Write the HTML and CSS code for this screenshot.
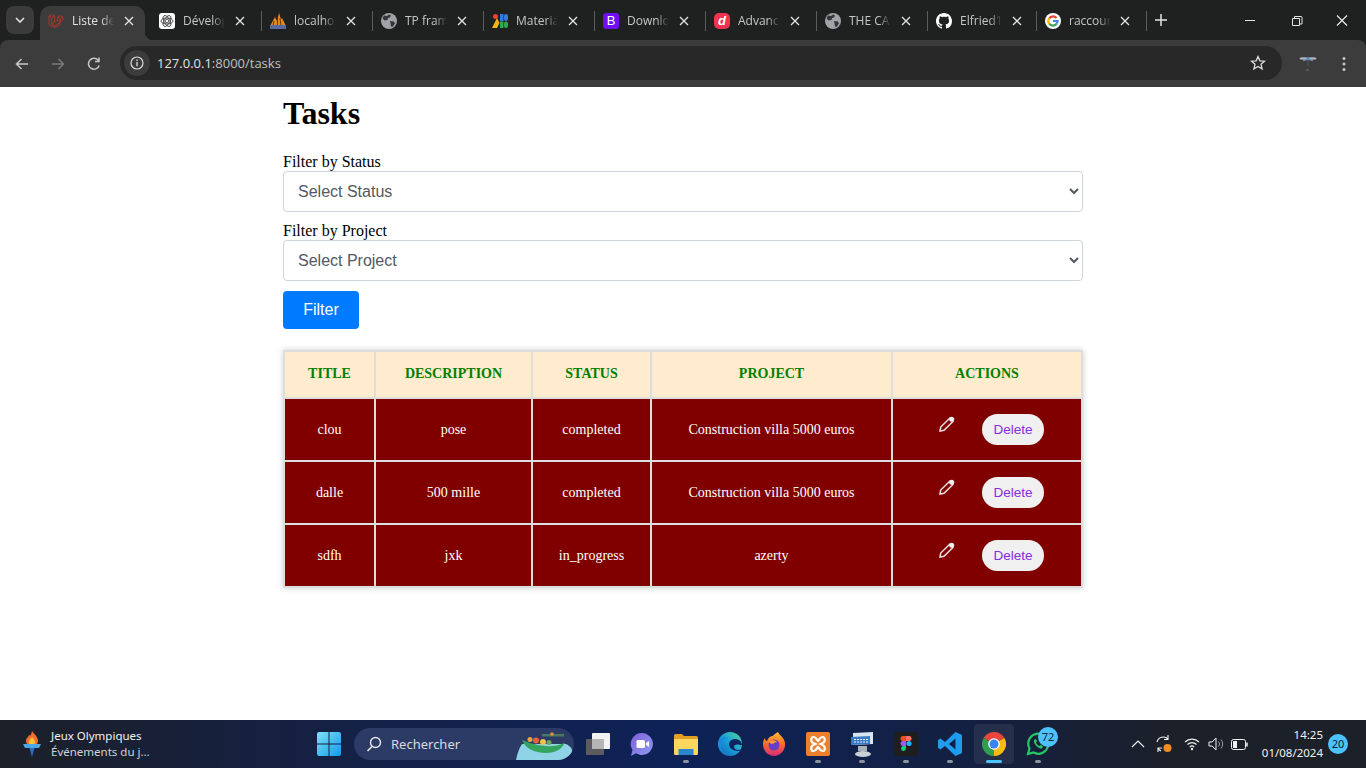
FILE: index.html
```html
<!DOCTYPE html>
<html>
<head>
    <title>Liste des tasks</title>
    <meta charset="utf-8">
    <link rel="stylesheet" href="styles.css">
</head>
<body>
<div class="screen">

    <div class="tabstrip">
        <div class="tab-menu"><svg width="10" height="6" viewBox="0 0 10 6"><path d="M1 1l4 4 4-4" fill="none" stroke="#e3e3e3" stroke-width="1.6"/></svg></div>
        <div class="tab active">
            <svg class="fav" viewBox="0 0 16 16"><path d="M1 3v8.600l5.500 3.100 5.500-3.100V8.900l3-1.800V4.200l-2.700-1.500-2.700 1.500v3L6.500 9V3L3.700 1.400zM1 3l2.700 1.600L6.500 3M3.700 4.600v6.600l2.800 1.600 5.500-3.200M6.500 12.800v1.900M9.600 4.200l2.700 1.500L15 4.200M12.300 5.700v3L9.600 7.200M6.500 9l-2.800 2.200" fill="none" stroke="#b9342b" stroke-width=".9"/></svg>
            <span class="tab-title">Liste des tasks</span>
            <svg class="tab-x" viewBox="0 0 10 10"><path d="M1 1l8 8M9 1l-8 8"/></svg>
        </div>
        <div class="tab">
            <svg class="fav" viewBox="0 0 16 16"><rect width="16" height="16" rx="3" fill="#fff"/><g fill="none" stroke="#333" stroke-width=".8"><circle cx="8" cy="8" r="1.800"/><ellipse cx="8" cy="8" rx="6" ry="3"/><ellipse cx="8" cy="8" rx="6" ry="3" transform="rotate(60 8 8)"/><ellipse cx="8" cy="8" rx="6" ry="3" transform="rotate(120 8 8)"/></g></svg>
            <span class="tab-title">Développement</span>
            <svg class="tab-x" viewBox="0 0 10 10"><path d="M1 1l8 8M9 1l-8 8"/></svg>
        </div>
        <div class="tab sep">
            <svg class="fav" viewBox="0 0 16 16"><path d="M0 13L5 4l2 4 2-8 2 6 1-1 4 8z" fill="#e08a1e"/><path d="M7.500 3v10M10 5l1 8M4 8l-1 5" stroke="#3c2a10" stroke-width=".8"/><rect y="12" width="16" height="4" fill="#5a6aa0"/></svg>
            <span class="tab-title">localhost</span>
            <svg class="tab-x" viewBox="0 0 10 10"><path d="M1 1l8 8M9 1l-8 8"/></svg>
        </div>
        <div class="tab sep">
            <svg class="fav" viewBox="0 0 16 16"><use href="#globe"/></svg>
            <span class="tab-title">TP framework</span>
            <svg class="tab-x" viewBox="0 0 10 10"><path d="M1 1l8 8M9 1l-8 8"/></svg>
        </div>
        <div class="tab sep">
            <svg class="fav" viewBox="0 0 16 16"><path d="M0 15L5 5l2.500 5L5 15z" fill="#f5b31a"/><circle cx="3.500" cy="3.500" r="2.500" fill="#e8452c"/><rect x="8" y="1" width="3.500" height="7" fill="#2f7de1"/><rect x="12" y="1" width="4" height="7" rx="2" fill="#2f7de1"/><rect x="8" y="8.500" width="3.500" height="6.500" fill="#2ea84a"/><rect x="12" y="8.500" width="4" height="6.500" rx="2" fill="#2ea84a"/></svg>
            <span class="tab-title">Material</span>
            <svg class="tab-x" viewBox="0 0 10 10"><path d="M1 1l8 8M9 1l-8 8"/></svg>
        </div>
        <div class="tab sep">
            <span class="fav letter boot">B</span>
            <span class="tab-title">Download</span>
            <svg class="tab-x" viewBox="0 0 10 10"><path d="M1 1l8 8M9 1l-8 8"/></svg>
        </div>
        <div class="tab sep">
            <span class="fav letter devd">d</span>
            <span class="tab-title">Advanced</span>
            <svg class="tab-x" viewBox="0 0 10 10"><path d="M1 1l8 8M9 1l-8 8"/></svg>
        </div>
        <div class="tab sep">
            <svg class="fav" viewBox="0 0 16 16"><use href="#globe"/></svg>
            <span class="tab-title">THE CAMP</span>
            <svg class="tab-x" viewBox="0 0 10 10"><path d="M1 1l8 8M9 1l-8 8"/></svg>
        </div>
        <div class="tab sep narrow">
            <svg class="fav" viewBox="0 0 16 16"><path fill="#fff" d="M8 0C3.58 0 0 3.58 0 8c0 3.54 2.29 6.53 5.47 7.59.4.07.55-.17.55-.38 0-.19-.01-.82-.01-1.49-2.01.37-2.53-.49-2.69-.94-.09-.23-.48-.94-.82-1.13-.28-.15-.68-.52-.01-.53.63-.01 1.08.58 1.23.82.72 1.21 1.87.87 2.33.66.07-.52.28-.87.51-1.07-1.78-.2-3.64-.89-3.64-3.95 0-.87.31-1.59.82-2.15-.08-.2-.36-1.02.08-2.12 0 0 .67-.21 2.2.82.64-.18 1.32-.27 2-.27.68 0 1.36.09 2 .27 1.53-1.04 2.2-.82 2.2-.82.44 1.1.16 1.92.08 2.12.51.56.82 1.27.82 2.15 0 3.07-1.87 3.75-3.65 3.95.29.25.54.73.54 1.48 0 1.07-.01 1.93-.01 2.2 0 .21.15.46.55.38A8.013 8.013 0 0016 8c0-4.42-3.58-8-8-8z"/></svg>
            <span class="tab-title">Elfried1</span>
            <svg class="tab-x" viewBox="0 0 10 10"><path d="M1 1l8 8M9 1l-8 8"/></svg>
        </div>
        <div class="tab sep last">
            <svg class="fav" viewBox="0 0 16 16"><circle cx="8" cy="8" r="8" fill="#fff"/><g fill="none" stroke-width="2.200"><path d="M11.500 5A4.600 4.600 0 0 0 4.200 5.300" stroke="#ea4335"/><path d="M4.200 5.300a4.600 4.600 0 0 0 0 5.400" stroke="#fbbc05"/><path d="M4.200 10.700a4.600 4.600 0 0 0 7.600-.3" stroke="#34a853"/><path d="M11.800 10.400A4.600 4.600 0 0 0 12.600 8H8" stroke="#4285f4"/></g></svg>
            <span class="tab-title">raccourci</span>
            <svg class="tab-x" viewBox="0 0 10 10"><path d="M1 1l8 8M9 1l-8 8"/></svg>
        </div>
        <svg class="tab-plus" width="12" height="12" viewBox="0 0 12 12"><path d="M6 0v12M0 6h12" stroke="#e3e3e3" stroke-width="1.500"/></svg>
        <div class="win-btns">
            <svg width="46" height="40" viewBox="0 0 46 40"><path d="M18 20.500h10" stroke="#e3e3e3"/></svg>
            <svg width="46" height="40" viewBox="0 0 46 40"><path d="M19.500 18.500h7v7h-7zM21.500 18.500v-2h6.500a1 1 0 0 1 1 1v6.500h-2.500" fill="none" stroke="#e3e3e3"/></svg>
            <svg width="46" height="40" viewBox="0 0 46 40"><path d="M18 15.500l10 10M28 15.500l-10 10" stroke="#f0f0f0" stroke-width="1.100"/></svg>
        </div>
    </div>

    <div class="toolbar">
        <svg class="nav-ic" viewBox="0 0 16 16"><path d="M14 8H2.500M7.500 3l-5 5 5 5" fill="none" stroke="#c7c7c7" stroke-width="1.500"/></svg>
        <svg class="nav-ic" viewBox="0 0 16 16"><path d="M2 8h11.500M8.500 3l5 5-5 5" fill="none" stroke="#7b7b7b" stroke-width="1.500"/></svg>
        <svg class="nav-ic" viewBox="0 0 16 16"><path d="M13.200 9.500A5.500 5.500 0 1 1 12.500 4.600M13 1.500v4H9" fill="none" stroke="#c7c7c7" stroke-width="1.500"/></svg>
        <div class="omnibox">
            <span class="site-info"><svg width="14" height="14" viewBox="0 0 14 14"><circle cx="7" cy="7" r="6" fill="none" stroke="#dcdcdc" stroke-width="1.200"/><path d="M7 6v4.200M7 3.600v1.300" stroke="#dcdcdc" stroke-width="1.300"/></svg></span>
            <span class="url">127.0.0.1<span class="url-dim">:8000/tasks</span></span>
            <svg class="star" width="16" height="16" viewBox="0 0 16 16"><path d="M8 1.500l1.900 4.300 4.600.4-3.500 3.100 1.100 4.600L8 11.500l-4.100 2.400L5 9.300 1.500 6.200l4.600-.4z" fill="none" stroke="#dcdcdc" stroke-width="1.300"/></svg>
        </div>
        <svg class="ext" width="18" height="20" viewBox="0 0 18 20"><ellipse cx="5" cy="4.500" rx="4.500" ry="1.200" fill="#aeb8c8"/><ellipse cx="13" cy="4.500" rx="4.500" ry="1.200" fill="#aeb8c8"/><path d="M4 7l4-1.500M14 7l-4-1.500" stroke="#7f8ba0"/><circle cx="9" cy="5" r="1.600" fill="#4a90d8"/><path d="M9 6v6" stroke="#4c586c"/><circle cx="8.500" cy="16" r="1.300" fill="#5a5f66"/></svg>
        <svg class="dots" width="4" height="16" viewBox="0 0 4 16"><circle cx="2" cy="2.500" r="1.500" fill="#c7c7c7"/><circle cx="2" cy="8" r="1.500" fill="#c7c7c7"/><circle cx="2" cy="13.500" r="1.500" fill="#c7c7c7"/></svg>
    </div>

    <div class="page">
        <div class="container">
            <h1>Tasks</h1>
            <form class="filters">
                <label for="status">Filter by Status</label>
                <select id="status" class="field"><option>Select Status</option></select>
                <label for="project">Filter by Project</label>
                <select id="project" class="field"><option>Select Project</option></select>
                <button type="button" class="btn-filter">Filter</button>
            </form>
            <table class="tasks">
                <tr>
                    <th class="c1">Title</th>
                    <th class="c2">Description</th>
                    <th class="c3">Status</th>
                    <th class="c4">Project</th>
                    <th>Actions</th>
                </tr>
                <tr>
                    <td>clou</td>
                    <td>pose</td>
                    <td>completed</td>
                    <td>Construction villa 5000 euros</td>
                    <td><div class="actions"><svg class="edit" viewBox="0 0 16 16"><path d="M1 15l.7-4 9-8.700 3.200 3.200L5 14.300z" fill="none" stroke="#e8e0e0" stroke-width="1.500"/><circle cx="12.700" cy="3.300" r="2.500" fill="#f4f0f0"/></svg><button type="button" class="btn-del">Delete</button></div></td>
                </tr>
                <tr>
                    <td>dalle</td>
                    <td>500 mille</td>
                    <td>completed</td>
                    <td>Construction villa 5000 euros</td>
                    <td><div class="actions"><svg class="edit" viewBox="0 0 16 16"><path d="M1 15l.7-4 9-8.700 3.200 3.200L5 14.300z" fill="none" stroke="#e8e0e0" stroke-width="1.500"/><circle cx="12.700" cy="3.300" r="2.500" fill="#f4f0f0"/></svg><button type="button" class="btn-del">Delete</button></div></td>
                </tr>
                <tr>
                    <td>sdfh</td>
                    <td>jxk</td>
                    <td>in_progress</td>
                    <td>azerty</td>
                    <td><div class="actions"><svg class="edit" viewBox="0 0 16 16"><path d="M1 15l.7-4 9-8.700 3.200 3.200L5 14.300z" fill="none" stroke="#e8e0e0" stroke-width="1.500"/><circle cx="12.700" cy="3.300" r="2.500" fill="#f4f0f0"/></svg><button type="button" class="btn-del">Delete</button></div></td>
                </tr>
            </table>
        </div>
    </div>

    <div class="taskbar">
        <div class="widget">
            <svg width="20" height="28" viewBox="0 0 20 28"><path d="M10 1c3 4 6 6 6 10 0 1-.3 2-1 3H5c-.8-1-1-2-1-3 0-3 2-3 3-6 1 1 2 1 3-4z" fill="#f0702c"/><path d="M10 7c1.500 2 3 3 3 5 0 1-.3 1.500-.6 2H7.600c-.4-.5-.6-1-.6-2 0-2 2-3 3-5z" fill="#f8c040"/><path d="M1 14h18l-2 4H3z" fill="#4aa8e8"/><path d="M7.500 18h5L10 27z" fill="#2a70c8"/></svg>
            <div class="widget-text">
                <div class="widget-title">Jeux Olympiques</div>
                <div class="widget-sub">Événements du j...</div>
            </div>
        </div>
        <div class="tb-icon">
            <svg width="24" height="24" viewBox="0 0 24 24"><defs><linearGradient id="winb" x1="0" y1="0" x2="1" y2="1"><stop offset="0" stop-color="#7fe0f8"/><stop offset="1" stop-color="#0f9be8"/></linearGradient></defs><path d="M0 2a2 2 0 0 1 2-2h9.500v11.500H0zM12.500 0H22a2 2 0 0 1 2 2v9.500H12.500zM0 12.500h11.500V24H2a2 2 0 0 1-2-2zM12.500 12.500H24V22a2 2 0 0 1-2 2h-9.500z" fill="url(#winb)"/></svg>
        </div>
        <div class="search">
            <svg width="16" height="16" viewBox="0 0 16 16"><circle cx="9.500" cy="6.500" r="5" fill="none" stroke="#e8e8e8" stroke-width="1.400"/><path d="M6 10.500L1.500 15" stroke="#e8e8e8" stroke-width="1.600"/></svg>
            <span>Rechercher</span>
            <svg class="search-art" width="58" height="32" viewBox="0 0 58 32"><path d="M0 32c1-5 3-12 6-16h44c4 2 7 5 6 8-1 4-5 8-8 8z" fill="#8ed4e6"/><path d="M6 12c10 4 28 10 42 3 1 0 1 1 0 1-3 6-10 9-18 9C18 25 9 20 6 12z" fill="#35a45e"/><circle cx="14" cy="11.500" r="2.500" fill="#f0a040"/><circle cx="20" cy="12.500" r="3" fill="#e8603c"/><circle cx="27" cy="14" r="3" fill="#f0c050"/><circle cx="33" cy="14.500" r="2.500" fill="#6aa868"/><path d="M26 6h22v2.500H26z" fill="#4c7a60"/><circle cx="36" cy="6" r="1.800" fill="#e8903c"/></svg>
        </div>
        <div class="tb-icon">
            <svg width="24" height="22" viewBox="0 0 24 22"><rect x="0" y="6" width="18" height="16" rx="1" fill="#5c5c5c"/><rect x="6" y="0" width="18" height="16" rx="1" fill="#f2f2f2"/><rect x="6" y="6" width="12" height="10" fill="#b5b5b5"/></svg>
        </div>
        <div class="tb-icon">
            <svg width="24" height="24" viewBox="0 0 24 24"><defs><linearGradient id="meet" x1="0" y1="0" x2="1" y2="1"><stop offset="0" stop-color="#7f5fd8"/><stop offset="1" stop-color="#8f9cf0"/></linearGradient></defs><path d="M12 1a11 11 0 1 1-6 20.300L1 24l1.500-6A11 11 0 0 1 12 1z" fill="url(#meet)"/><rect x="6.500" y="8" width="8.500" height="8" rx="1.500" fill="#fff"/><path d="M16 11l3-2v6l-3-2z" fill="#fff"/></svg>
        </div>
        <div class="tb-icon dot">
            <svg width="24" height="21" viewBox="0 0 24 21"><path d="M0 1.500A1.500 1.500 0 0 1 1.500 0H8l2 2h12.500A1.500 1.500 0 0 1 24 3.500V8H0z" fill="#e0a020"/><path d="M0 5h24v14.500a1.500 1.500 0 0 1-1.500 1.500h-21A1.500 1.500 0 0 1 0 19.500z" fill="#ffd75e"/><rect x="4.500" y="15" width="15" height="6" fill="#2a86d0"/></svg>
        </div>
        <div class="tb-icon">
            <svg width="24" height="24" viewBox="0 0 24 24"><defs><linearGradient id="edg" x1="1" y1="0" x2="0" y2="1"><stop offset="0" stop-color="#4fd89a"/><stop offset=".5" stop-color="#1aa0d8"/><stop offset="1" stop-color="#0f62b8"/></linearGradient></defs><circle cx="12" cy="12" r="12" fill="url(#edg)"/><path d="M24 13c0-4-4-6-7-6-4 0-6 3-6 5 0 4 4 7 9 7 1 0 2-.5 3-1.500-3 1-7 .5-7-3 0-1 1-2 3-2 2 0 3 1 5 .5z" fill="#0c2560"/><path d="M0 12c0-5 5-8 10-6-4 1-7 4-7 9 0 3 2 6 5 8-4-2-8-6-8-11z" fill="#1b8adc"/></svg>
        </div>
        <div class="tb-icon">
            <svg width="24" height="24" viewBox="0 0 24 24"><defs><linearGradient id="ff" x1="0" y1="0" x2="0" y2="1"><stop offset="0" stop-color="#ffc02e"/><stop offset=".5" stop-color="#ff6a2a"/><stop offset="1" stop-color="#d62a7a"/></linearGradient></defs><path d="M16 0c1 3 6 5 7 11 1 7-5 13-11 13S1 19 1 12c0-3 1-5 2-6 0 2 1 3 2 3 1-3 3-5 6-5 0-1 2-2 5-4z" fill="url(#ff)"/><circle cx="12" cy="13" r="5.500" fill="#6a3bc8"/><path d="M7 9c2-1 7-1 8 1-2 0-3 1-4 2-2 0-4-1-4-3z" fill="#ff9a2a"/></svg>
        </div>
        <div class="tb-icon dot">
            <svg width="24" height="24" viewBox="0 0 24 24"><rect width="24" height="24" rx="2" fill="#ee7f2d"/><path d="M7.500 5c-3 0-3 5 0 6l2 1-2 1c-3 1-3 6 0 6s3-3 4.500-4c1.500 1 1.500 4 4.500 4s3-5 0-6l-2-1 2-1c3-1 3-6 0-6s-3 3-4.500 4C10.500 8 10.500 5 7.500 5z" fill="none" stroke="#fff" stroke-width="2.200"/></svg>
        </div>
        <div class="tb-icon dot">
            <svg width="24" height="25" viewBox="0 0 24 25"><path d="M3 1l20-1v12L3 13z" fill="#d8e4f0"/><path d="M1 5l19-1v8L1 13z" fill="#3c78c8"/><path d="M4 7.500h14M4 10h14" stroke="#e8f0f8" stroke-dasharray="2 1"/><path d="M8 14h9v5H8z" fill="#a8b0b8"/><ellipse cx="13" cy="22" rx="8" ry="3" fill="#c8d0d8"/></svg>
        </div>
        <div class="tb-icon dot">
            <svg width="24" height="24" viewBox="0 0 24 24"><rect width="24" height="24" rx="1" fill="#1e1e1e"/><path d="M9 4h3v5H9a2.500 2.500 0 0 1 0-5z" fill="#f24e1e"/><path d="M12 4h3a2.500 2.500 0 0 1 0 5h-3z" fill="#ff7262"/><path d="M9 9h3v5H9a2.500 2.500 0 0 1 0-5z" fill="#a259ff"/><circle cx="15" cy="11.500" r="2.500" fill="#1abcfe"/><path d="M9 14h3v2.500A2.500 2.500 0 1 1 9 14z" fill="#0acf83"/></svg>
        </div>
        <div class="tb-icon dot">
            <svg width="24" height="24" viewBox="0 0 24 24"><path d="M17.500 0L24 3v18l-6.500 3L7 14l-4.500 3.500L0 16V8l2.500-1.500L7 10zM17.500 6.500L11 12l6.500 5.500z" fill="#1f9cf0" fill-rule="evenodd"/></svg>
        </div>
        <div class="tb-icon active">
            <svg width="24" height="24" viewBox="0 0 24 24"><path d="M12 12L1.600 6A12 12 0 0 1 22.400 6z" fill="#e8453c"/><path d="M12 12L1.600 6A12 12 0 0 0 12 24z" fill="#2f9e50"/><path d="M12 12L22.400 6A12 12 0 0 1 12 24z" fill="#f9bc15"/><circle cx="12" cy="12" r="5.800" fill="#fff"/><circle cx="12" cy="12" r="4.500" fill="#3a83f0"/></svg>
        </div>
        <div class="tb-icon dot">
            <svg width="24" height="24" viewBox="0 0 24 24"><path d="M2 22l1.500-5.500A10 10 0 1 1 7.500 20.500z" fill="none" stroke="#25c866" stroke-width="2.200"/><path d="M8.500 7.500c-1 1-1 3 1 5.500s4.500 4 6 3.500 1.500-2 1-2.500l-2-1-1 1c-1 0-3-2-3.500-3.500l1-1-1-2.500z" fill="#25c866"/></svg>
            <span class="count">72</span>
        </div>
        <div class="tray">
            <svg width="14" height="8" viewBox="0 0 14 8"><path d="M1 7l6-6 6 6" fill="none" stroke="#f0f0f0" stroke-width="1.200"/></svg>
            <svg class="tray-sync" width="18" height="20" viewBox="0 0 18 20"><path d="M2 8a6.500 6.500 0 0 1 11-3M13 1v4.500H9M3 18v-4h4M3 14a6 6 0 0 0 3 3" fill="none" stroke="#f0f0f0" stroke-width="1.100"/><circle cx="12.500" cy="14" r="4" fill="#f28a1c"/></svg>
            <svg class="tray-wifi" width="16" height="14" viewBox="0 0 16 14"><path d="M1 5a10 10 0 0 1 14 0M3.500 7.500a6.500 6.500 0 0 1 9 0M5.800 10a3.200 3.200 0 0 1 4.400 0" fill="none" stroke="#f0f0f0" stroke-width="1.200"/><circle cx="8" cy="12" r="1.200" fill="#f0f0f0"/></svg>
            <svg class="tray-vol" width="18" height="14" viewBox="0 0 18 14"><path d="M1 5h3l4-4v12l-4-4H1z" fill="none" stroke="#f0f0f0"/><path d="M10.500 4.500a3.500 3.500 0 0 1 0 5M13 2.500a7 7 0 0 1 0 9" fill="none" stroke="#a0a0a0"/></svg>
            <svg class="tray-bat" width="18" height="11" viewBox="0 0 18 11"><rect x=".5" y=".5" width="14" height="10" rx="2" fill="none" stroke="#f0f0f0"/><rect x="2" y="2" width="4" height="7" fill="#f0f0f0"/><path d="M16 3.500v4" stroke="#f0f0f0" stroke-width="1.500"/></svg>
            <div class="clock"><div>14:25</div><div>01/08/2024</div></div>
            <span class="notif">20</span>
        </div>
    </div>

</div>

<svg class="defs" width="0" height="0"><defs><g id="globe"><circle cx="8" cy="8" r="8" fill="#a0a4a8"/><path d="M3 2.500l3 .5 2-1.500 2 1-1 2-2 .5-.5 2-3 .5-2-2zM9 8l4 .5 1 2-2.500 3.500-1.500-.5-.5-3z" fill="#35363a"/></g></defs></svg>
</body>
</html>
```

FILE: styles.css
```css
* {
    box-sizing: border-box;
}

body {
    margin: 0;
    font-family: "Liberation Serif", serif;
    background: #fff;
}

.screen {
    width: 1366px;
    height: 768px;
    display: flex;
    flex-direction: column;
    overflow: hidden;
    background: #1f2020;
}

.defs {
    position: absolute;
}

/* browser tabs */
.tabstrip {
    height: 40px;
    flex: none;
    display: flex;
    align-items: flex-start;
    padding: 6px 0 0 6px;
    font-family: "Open Sans", sans-serif;
    font-size: 12px;
    color: #c4c7c5;
}

.tab-menu {
    width: 28px;
    height: 28px;
    margin-right: 6px;
    background: #3b3b3b;
    border-radius: 8px;
    display: flex;
    align-items: center;
    justify-content: center;
}

.tab {
    width: 111px;
    height: 34px;
    padding: 0 10px 5px 8px;
    display: flex;
    align-items: center;
    position: relative;
    flex: none;
}

.tab.active {
    width: 105px;
    margin-right: 6px;
    background: #3c3c3c;
    border-radius: 10px 10px 0 0;
    color: #e3e3e3;
}

.tab.active::after {
    content: "";
    position: absolute;
    right: -8px;
    bottom: 0;
    width: 8px;
    height: 8px;
    background: radial-gradient(circle at 100% 0, transparent 8px, #3c3c3c 8.5px);
}

.tab.sep::before {
    content: "";
    position: absolute;
    left: -1px;
    top: 5px;
    height: 20px;
    border-left: 1px solid #5a5b5c;
}

.tab.narrow {
    width: 110px;
}

.tab.last {
    width: 110px;
    margin-left: -1px;
}

.tab.last .tab-x {
    margin-left: 9px;
}

.tab.last::after {
    content: "";
    position: absolute;
    right: 0;
    top: 5px;
    height: 20px;
    border-left: 1px solid #5a5b5c;
}

.fav {
    width: 16px;
    height: 16px;
    flex: none;
}

.letter {
    border-radius: 3px;
    color: #fff;
    text-align: center;
    font-family: "Liberation Sans", sans-serif;
    font-size: 13px;
    line-height: 16px;
}

.boot {
    background: #7010f0;
}

.devd {
    background: #f0334f;
    border-radius: 5px;
    font-style: italic;
    font-weight: bold;
}

.tab-title {
    width: 42px;
    margin-left: 8px;
    white-space: nowrap;
    overflow: hidden;
    -webkit-mask-image: linear-gradient(to right, #000 70%, transparent);
    mask-image: linear-gradient(to right, #000 70%, transparent);
}

.tab-x {
    width: 10px;
    height: 10px;
    margin-left: 10px;
    flex: none;
    fill: none;
    stroke: #e3e3e3;
    stroke-width: 1.3;
}

.tab-plus {
    margin: 8px 0 0 8px;
}

.win-btns {
    margin: -6px 0 0 auto;
    display: flex;
    padding-right: 1px;
}

/* address bar */
.toolbar {
    height: 47px;
    flex: none;
    background: #3c3c3c;
    border-radius: 8px 8px 0 0;
    display: flex;
    align-items: center;
    padding-left: 14px;
    font-family: "Open Sans", sans-serif;
}

.nav-ic {
    width: 16px;
    height: 16px;
    margin-right: 20px;
    flex: none;
}

.nav-ic:nth-child(3) {
    margin-right: 18px;
}

.omnibox {
    width: 1162px;
    height: 34px;
    margin-top: -1px;
    background: #282828;
    border-radius: 17px;
    display: flex;
    align-items: center;
    padding-left: 4px;
    flex: none;
}

.site-info {
    width: 26px;
    height: 26px;
    border-radius: 50%;
    background: #3c3c3c;
    display: flex;
    align-items: center;
    justify-content: center;
}

.url {
    margin-left: 7px;
    font-size: 13px;
    color: #e3e3e3;
}

.url-dim {
    color: #c0c0c0;
}

.star {
    margin-left: auto;
    margin-right: 16px;
}

.ext {
    margin-left: 17px;
}

.dots {
    margin-left: 25px;
}

/* the page itself */
.page {
    flex: 1;
    background: #fff;
    min-height: 0;
}

.container {
    width: 800px;
    margin-left: 283px;
}

h1 {
    margin: 0;
    padding-top: 8px;
    height: 65px;
    font-size: 32px;
    line-height: 37px;
}

.filters {
    display: flex;
    flex-direction: column;
    align-items: flex-start;
    font-size: 16px;
}

.filters label {
    line-height: 19px;
}

.field {
    width: 100%;
    height: 41px;
    margin-bottom: 9px;
    padding: 0 10px;
    font-family: "Liberation Sans", sans-serif;
    font-size: 16px;
    color: #52595f;
    background: #fff;
    border: 1px solid #ced4da;
    border-radius: 4px;
}

.btn-filter {
    width: 76px;
    height: 38px;
    margin-top: 1px;
    font-family: "Liberation Sans", sans-serif;
    font-size: 16px;
    color: #fff;
    background: #007bff;
    border: none;
    border-radius: 4px;
}

.tasks {
    width: 800px;
    margin: 21px 0 0 0;
    border-collapse: collapse;
    box-shadow: 0 0 6px rgba(0, 0, 0, 0.2);
    font-size: 14px;
    text-align: center;
}

.tasks th,
.tasks td {
    border: 2px solid #ddd;
    padding: 0;
}

.tasks th {
    height: 47px;
    padding-bottom: 1px;
    background: #ffebcd;
    color: #008000;
    text-transform: uppercase;
    font-weight: bold;
}

.tasks td {
    height: 63px;
    background: #800000;
    color: #fff;
}

.c1 { width: 91px; }
.c2 { width: 157px; }
.c3 { width: 119px; }
.c4 { width: 241px; }

.actions {
    display: flex;
    align-items: flex-start;
    padding-left: 46px;
}

.edit {
    width: 16px;
    height: 16px;
    margin-top: 2px;
}

.btn-del {
    width: 62px;
    height: 31px;
    margin-left: 27px;
    font-family: "Liberation Sans", sans-serif;
    font-size: 13.5px;
    color: #8a2be2;
    background: #f0f0f0;
    border: none;
    border-radius: 16px;
}

/* windows taskbar */
.taskbar {
    height: 48px;
    flex: none;
    background: linear-gradient(to right, #1c2029 0, #152042 22%, #0e2258 50%, #14203f 72%, #1c2029 86%);
    display: flex;
    align-items: center;
    font-family: "Noto Sans", sans-serif;
    color: #f2f2f2;
}

.widget {
    width: 307px;
    flex: none;
    padding-left: 22px;
    display: flex;
    align-items: center;
}

.widget-text {
    margin-left: 9px;
    font-size: 11.5px;
    line-height: 16px;
}

.widget-sub {
    color: #d0d2d8;
}

.tb-icon {
    width: 44px;
    height: 48px;
    flex: none;
    display: flex;
    align-items: center;
    justify-content: center;
    position: relative;
}

.tb-icon.dot::after {
    content: "";
    position: absolute;
    left: 19px;
    bottom: 5px;
    width: 6px;
    height: 3px;
    border-radius: 2px;
    background: #8d93a0;
}

.tb-icon.active::before {
    content: "";
    position: absolute;
    left: 2px;
    top: 4px;
    width: 40px;
    height: 40px;
    background: rgba(255, 255, 255, 0.07);
    border-radius: 4px;
}

.tb-icon.active::after {
    content: "";
    position: absolute;
    left: 14px;
    bottom: 5px;
    width: 16px;
    height: 3px;
    border-radius: 2px;
    background: #4cc2ff;
}

.tb-icon svg {
    position: relative;
}

.search {
    width: 220px;
    height: 32px;
    margin: 0 2px 0 3px;
    flex: none;
    padding-left: 12px;
    background: #2c3a66;
    border-radius: 16px;
    display: flex;
    align-items: center;
    font-size: 13px;
    color: #d8dbe4;
    position: relative;
    overflow: hidden;
}

.search span {
    margin-left: 9px;
}

.search-art {
    position: absolute;
    right: 0;
    top: 0;
}

.count {
    position: absolute;
    left: 22px;
    top: 7px;
    width: 20px;
    height: 20px;
    border-radius: 50%;
    background: #4cc2ff;
    color: #10203a;
    font-size: 11px;
    line-height: 20px;
    text-align: center;
}

.tray {
    flex: 1;
    display: flex;
    align-items: center;
    padding-left: 71px;
}

.tray-sync {
    margin-left: 10px;
}

.tray-wifi {
    margin-left: 11px;
}

.tray-vol {
    margin-left: 8px;
}

.tray-bat {
    margin-left: 5px;
}

.clock {
    width: 74px;
    text-align: right;
    font-size: 11.5px;
    line-height: 18px;
}

.notif {
    width: 20px;
    height: 20px;
    margin-left: 5px;
    border-radius: 50%;
    background: #4cc2ff;
    color: #10203a;
    font-size: 11px;
    line-height: 20px;
    text-align: center;
}
```
